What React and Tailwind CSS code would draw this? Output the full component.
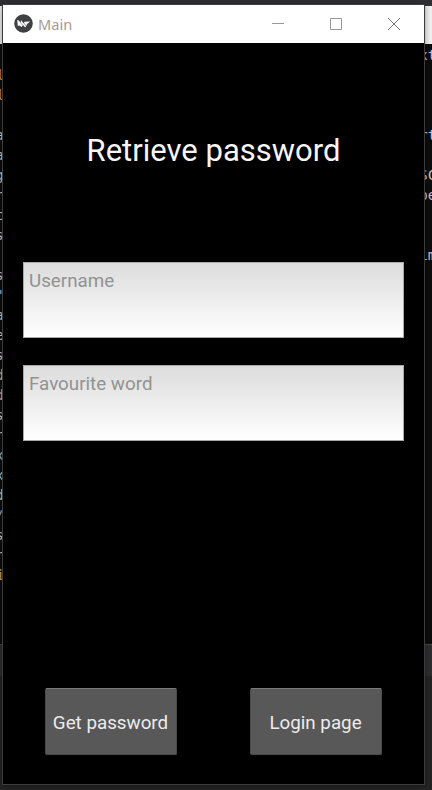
const leftCode = [
  ["", ""], ["l", "text-[#e09a4c]"], ["l", "text-[#e09a4c]"], ["", ""],
  ["a", "text-[#d4d0cc]"], ["a", "text-[#d4d0cc]"], ["g", "text-[#d4d0cc]"], ["r", "text-[#d4d0cc]"],
  ["c", "text-[#d4d0cc]"], ["s", "text-[#d4d0cc]"], ["", ""], ["s", "text-[#d4d0cc]"],
  ["\"", "text-[#8fc4ec]"], ["a", "text-[#d4d0cc]"], ["e", "text-[#d4d0cc]"], ["s", "text-[#d4d0cc]"],
  ["d", "text-[#e0b078]"], ["d", "text-[#e0b078]"], ["s", "text-[#d4d0cc]"], ["r", "text-[#d4d0cc]"],
  ["x", "text-[#9fd0df]"], ["x", "text-[#9fd0df]"], ["d", "text-[#d0c8b0]"], ["/", "text-[#8fb4dc]"],
  ["s", "text-[#d4d0cc]"], ["r", "text-[#d4d0cc]"], ["i", "text-[#e09a4c]"],
];

const rightCode = ["xt", "", "", "", "rt", "", "SC", "be", "", "", "im"];

function Editor() {
  return (
    <div className="flex h-full flex-col bg-[#0c0c0c] font-['DejaVu_Sans_Mono','Liberation_Mono',monospace] text-[14.6px] leading-5">
      <div className="h-[6px] shrink-0 bg-[#303033]" />
      <div className="h-[38px] shrink-0 bg-[#f0f0f0]" />
      <div className="flex h-[600px] shrink-0 justify-between overflow-hidden">
        <div className="w-[3px] overflow-hidden pt-px">
          {leftCode.map(([text, color], i) => (
            <div key={i} className={`h-5 ${text === "l" || text === "i" ? "-ml-[4px]" : "-ml-[5px]"} ${color}`}>{text}</div>
          ))}
        </div>
        <div className="w-[10px] overflow-hidden pt-px text-[#c0c4c8]">
          {rightCode.map((text, i) => (
            <div key={i} className="-ml-[3px] h-5 whitespace-nowrap">{text}</div>
          ))}
        </div>
      </div>
      <div className="h-[32px] shrink-0 border-t border-[#464646] bg-[#2d2d30]" />
      <div className="grow bg-[#242424]" />
    </div>
  );
}

function Logo() {
  return (
    <svg className="mb-[2px] size-[19px]" viewBox="0 0 19 19">
      <circle cx="9.5" cy="9.5" r="9.3" fill="#3f4143" />
      <path d="M3.2 6 L4.8 6.4 L6.8 9 L7 6 L9.6 9.6 L10.6 7.8 L16.2 7.6 L13.4 9.8 L11.2 13.4 L9 11 L7.6 13 L5.4 11.6 L3.8 12 Z" fill="#fff" />
      <path d="M7 9.2L8.6 11M10.4 9.4L11.6 11.6" stroke="#3f4143" strokeWidth=".6" />
    </svg>
  );
}

function TitleBar() {
  return (
    <div className="flex h-[38px] shrink-0 items-center bg-white pl-[11px]">
      <Logo />
      <span className="ml-[5px] font-['Noto_Sans','Open_Sans',sans-serif] text-[14.6px] leading-5 text-[#a39c98]">Main</span>
      <div className="ml-auto flex items-center gap-[46px] pr-6">
        <svg className="size-[12px]" viewBox="0 0 12 12"><path d="M0 5.5H12" stroke="#999" /></svg>
        <svg className="size-[12px]" viewBox="0 0 12 12" fill="none"><path d="M.5 .5H11.5V11.5H.5Z" stroke="#999" /></svg>
        <svg className="size-[12px]" viewBox="0 0 12 12"><path d="M0 0L12 12M12 0L0 12" stroke="#777" /></svg>
      </div>
    </div>
  );
}

function Field({ label }) {
  return (
    <div className="h-[76px] w-[381px] border border-[#a8a8a8] bg-linear-to-b from-[#dcdcdc] to-white pt-[8px] pl-[5px] text-[18.8px] leading-[21px] text-[#929292]">
      {label}
    </div>
  );
}

function Button({ children }) {
  return (
    <button className="flex h-[67px] w-[132px] items-center justify-center rounded-[2px] border border-[#4a4a4a] border-t-[#7a7a7a] bg-[#585858] pt-[4px] pr-px text-[18.8px] whitespace-nowrap text-[#ececec]">
      {children}
    </button>
  );
}

export default function App() {
  return (
    <div className="relative h-[790px] w-[432px] overflow-hidden">
      <Editor />
      <div className="absolute top-[4px] left-[2px] flex h-[781px] w-[423px] flex-col border border-[#3c3c3c] bg-black font-[Roboto,sans-serif] shadow-[0_1px_6px_rgba(0,0,0,0.4)]">
        <TitleBar />
        <div className="flex grow flex-col items-center">
          <h1 className="mt-[90px] text-[31px] leading-9 text-[#f6f6f6]">Retrieve password</h1>
          <div className="mt-[93px] flex flex-col gap-[27px]">
            <Field label="Username" />
            <Field label="Favourite word" />
          </div>
          <div className="mt-auto mb-[29px] flex gap-[73px]">
            <Button>Get password</Button>
            <Button>Login page</Button>
          </div>
        </div>
      </div>
    </div>
  );
}
